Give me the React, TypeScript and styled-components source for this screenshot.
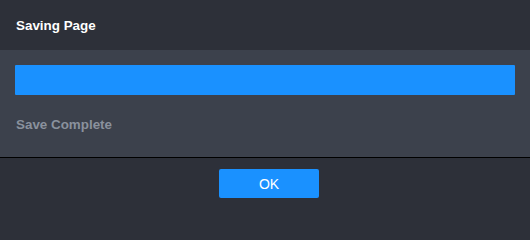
import styled, { createGlobalStyle } from "styled-components";

const GlobalStyle = createGlobalStyle`
  html, body {
    margin: 0;
    padding: 0;
    background: #2d3039;
  }
  * { box-sizing: border-box; }
`

const Dialog = styled.div`
  width: 530px;
  height: 208px;
  display: flex;
  flex-direction: column;
  font-family: "Liberation Sans", Arial, sans-serif;
  background-color: #2d3039;
`
const Header = styled.div`
  height: 50px;
  padding: 0 16px;
  display: flex;
  align-items: center;
  color: #ffffff;
  font-size: 13.4px;
  font-weight: bold;
`
const Body = styled.div`
  height: 108px;
  padding: 15px 15px 0;
  background-color: #3c414c;
  border-bottom: 1px solid #000000;
`
const ProgressBar = styled.div`
  height: 30px;
  border-radius: 1px;
  background-color: #1a91ff;
`
const Status = styled.div`
  margin-top: 17px;
  padding-left: 1px;
  color: #8a919d;
  font-size: 13.4px;
  font-weight: bold;
  line-height: 25px;
`
const Footer = styled.div`
  flex: 1;
  display: flex;
  justify-content: center;
  padding: 11px 0 0 8px;
`
const OkButton = styled.button`
  width: 100px;
  height: 29px;
  border: none;
  border-radius: 2px;
  background-color: #1a91ff;
  color: #ffffff;
  font-family: "Liberation Sans", Arial, sans-serif;
  font-size: 14px;
  cursor: pointer;
`

function App() {
  return (
    <>
      <GlobalStyle />
      <Dialog>
        <Header>Saving Page</Header>
        <Body>
          <ProgressBar style={{ width: "100%" }} />
          <Status>Save Complete</Status>
        </Body>
        <Footer>
          <OkButton>OK</OkButton>
        </Footer>
      </Dialog>
    </>
  )
}
export default App;
